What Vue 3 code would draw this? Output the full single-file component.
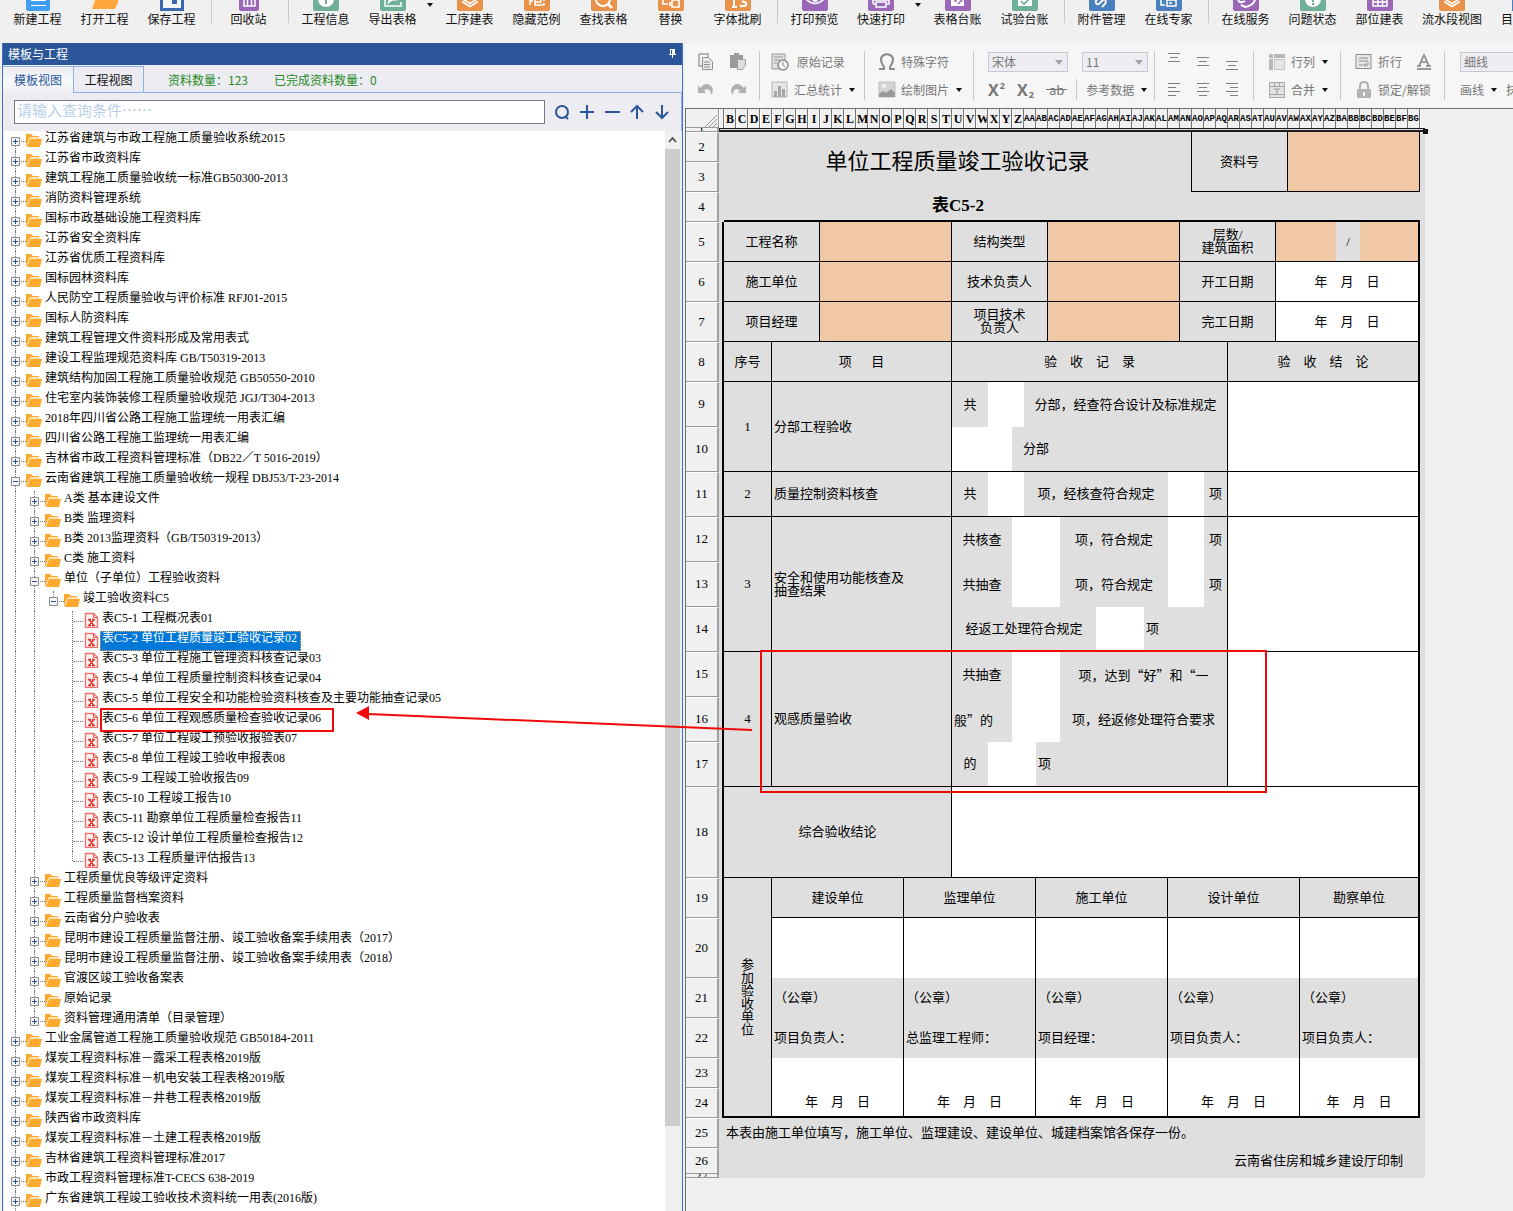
<script setup>
import { ref } from 'vue'

const orange = '#e8924a'
const green = '#6fae97'
const purple = '#9b68b8'
const blue = '#4a80bd'
const stack = '<path d="M5 1.5l8 5 8-5M5 -1.5l8 5 8-5" fill="none" stroke="#fff" stroke-width="1.6"/>'

const mainTools = [
  { label: '新建工程', art: '<path d="M1 0h24v9q0 2-2 2H3q-2 0-2-2z" fill="#3f9df2"/><path d="M6 0h15v1H6zM6 5h15v1H6z" fill="#fff"/>' },
  { label: '打开工程', art: '<path d="M0 9L3 0h24l-4 9H0z" fill="#ffa63c"/><path d="M0 7L3 0" stroke="#ffd9a6" fill="none"/>' },
  { label: '保存工程', art: '<path d="M1 0h24v11H1z" fill="#3a68ad"/><path d="M4 0h18v8H4z" fill="#f4f6fa"/><path d="M13 0h5v4h-5z" fill="#3a68ad"/>' },
  { type: 'sep' },
  { label: '回收站', art: `<path d="M3 0h20v9q0 2-2 2H5q-2 0-2-2z" fill="${purple}"/><path d="M8 0v6h11V0M11.500 0v6M15.500 0v6" stroke="#fff" stroke-width="1.5" fill="none"/>` },
  { type: 'sep' },
  { label: '工程信息', fill: green, art: '<circle cx="13" cy="-1" r="8" fill="#fff"/><path d="M12 0h2v4h-2z" fill="#6fae97"/>' },
  { label: '导出表格', fill: green, art: '<path d="M5 0v6h16V2M8 4q2-5 8-4M15 0l4-1M8 1l3 0" stroke="#fff" stroke-width="1.5" fill="none"/>' },
  { type: 'caret' },
  { label: '工序建表', fill: orange, art: stack },
  { label: '隐藏范例', fill: orange, art: '<path d="M6 0v5M6 1h3M11 0v5h9V3M11 2h6V0M20 0v1" stroke="#fff" stroke-width="1.5" fill="none"/>' },
  { label: '查找表格', fill: orange, art: '<circle cx="12" cy="-1" r="7" stroke="#fff" stroke-width="2" fill="none"/><path d="M17 4l4 4" stroke="#fff" stroke-width="2.500"/>' },
  { label: '替换', fill: orange, art: '<path d="M5 0v4h5M14 0h7v7h-7zM12 2v4" stroke="#fff" stroke-width="1.600" fill="none"/>' },
  { label: '字体批刷', fill: orange, art: '<path d="M9 0v6M7 7h5M16 6h4q2-1 1-3l-4-2M15 5l2 2" stroke="#fff" stroke-width="2" fill="none"/>' },
  { type: 'sep' },
  { label: '打印预览', fill: purple, art: '<path d="M4 -1q9 9 18 0" stroke="#fff" stroke-width="1.600" fill="none"/><circle cx="13" cy="-1" r="3" fill="#fff"/>' },
  { label: '快速打印', fill: purple, narrow: true, art: '<path d="M5 4V0h16v4h-3M5 4h3M8 2h10v5H8z" stroke="#fff" stroke-width="1.500" fill="none"/>' },
  { type: 'caret' },
  { label: '表格台账', fill: purple, art: '<path d="M6 0v6h13V0" fill="#fff"/><path d="M9 1h3M13 4l5-5" stroke="#9b68b8" stroke-width="1.500"/>' },
  { label: '试验台账', fill: green, art: '<path d="M6 0h14v6H6z" fill="#fff"/><path d="M9 1l3 3 5-5" stroke="#6fae97" stroke-width="1.600" fill="none"/>' },
  { type: 'sep' },
  { label: '附件管理', fill: blue, art: '<path d="M15 -1l-5 5q-2 1-3-1t1-3l4-4M12 1l3-2q3 2 1 5l-3 3" stroke="#fff" stroke-width="1.800" fill="none"/>' },
  { label: '在线专家', fill: blue, art: '<path d="M5 0v5h4M11 0h9v6h-9zM13 3h3" stroke="#fff" stroke-width="1.500" fill="none"/>' },
  { type: 'sep' },
  { label: '在线服务', fill: purple, art: '<path d="M5 0q2 4 7 1M8 5l4 2q8-1 10-7" stroke="#fff" stroke-width="2" fill="none"/>' },
  { label: '问题状态', fill: green, art: '<circle cx="13" cy="-1" r="8" fill="#fff"/><path d="M12 0h2v2h-2zM12 3h2v2h-2z" fill="#6fae97"/>' },
  { label: '部位建表', fill: purple, art: '<path d="M6 0v6h14V0M6 2h14M11 0v6M15.500 0v6" stroke="#fff" stroke-width="1.500" fill="none"/>' },
  { label: '流水段视图', fill: orange, wide: true, art: stack },
  { label: '目', cut: true, art: `<path d="M11 0h15v11H11z" fill="${blue}"/>` }
]

const tree = [
  '江苏省建筑与市政工程施工质量验收系统2015',
  '江苏省市政资料库',
  '建筑工程施工质量验收统一标准GB50300-2013',
  '消防资料管理系统',
  '国标市政基础设施工程资料库',
  '江苏省安全资料库',
  '江苏省优质工程资料库',
  '国标园林资料库',
  '人民防空工程质量验收与评价标准 RFJ01-2015',
  '国标人防资料库',
  '建筑工程管理文件资料形成及常用表式',
  '建设工程监理规范资料库 GB/T50319-2013',
  '建筑结构加固工程施工质量验收规范 GB50550-2010',
  '住宅室内装饰装修工程质量验收规范 JGJ/T304-2013',
  '2018年四川省公路工程施工监理统一用表汇编',
  '四川省公路工程施工监理统一用表汇编',
  '吉林省市政工程资料管理标准（DB22／T 5016-2019）',
  '-云南省建筑工程施工质量验收统一规程 DBJ53/T-23-2014',
  '>A类 基本建设文件',
  '>B类 监理资料',
  '>B类 2013监理资料（GB/T50319-2013）',
  '>C类 施工资料',
  '>-单位（子单位）工程验收资料',
  '>>-竣工验收资料C5',
  '>>>表C5-1 工程概况表01',
  '>>>表C5-2 单位工程质量竣工验收记录02',
  '>>>表C5-3 单位工程施工管理资料核查记录03',
  '>>>表C5-4 单位工程质量控制资料核查记录04',
  '>>>表C5-5 单位工程安全和功能检验资料核查及主要功能抽查记录05',
  '>>>表C5-6 单位工程观感质量检查验收记录06',
  '>>>表C5-7 单位工程竣工预验收报验表07',
  '>>>表C5-8 单位工程竣工验收申报表08',
  '>>>表C5-9 工程竣工验收报告09',
  '>>>表C5-10 工程竣工报告10',
  '>>>表C5-11 勘察单位工程质量检查报告11',
  '>>>表C5-12 设计单位工程质量检查报告12',
  '>>>表C5-13 工程质量评估报告13',
  '>工程质量优良等级评定资料',
  '>工程质量监督档案资料',
  '>云南省分户验收表',
  '>昆明市建设工程质量监督注册、竣工验收备案手续用表（2017）',
  '>昆明市建设工程质量监督注册、竣工验收备案手续用表（2018）',
  '>官渡区竣工验收备案表',
  '>原始记录',
  '>资料管理通用清单（目录管理）',
  '工业金属管道工程施工质量验收规范 GB50184-2011',
  '煤炭工程资料标准－露采工程表格2019版',
  '煤炭工程资料标准－机电安装工程表格2019版',
  '煤炭工程资料标准－井巷工程表格2019版',
  '陕西省市政资料库',
  '煤炭工程资料标准－土建工程表格2019版',
  '吉林省建筑工程资料管理标准2017',
  '市政工程资料管理标准T-CECS 638-2019',
  '广东省建筑工程竣工验收技术资料统一用表(2016版)'
].map((line) => {
  const [, arrows, minus, text] = line.match(/^(>*)(-?)(.*)$/)
  return { level: arrows.length, open: minus === '-', text, file: arrows.length === 3 }
})
// a guide continues below a row when a sibling of that level follows before its parent ends
const continues = (index, level) => {
  for (let i = index + 1; i < tree.length; i++) {
    if (tree[i].level === level) return true
    if (tree[i].level < level) return false
  }
  return level === 0
}
tree.forEach((node, i) => {
  node.guides = Array.from({ length: node.level }, (_, l) => continues(i, l))
  node.last = !continues(i, node.level)
  node.first = i === 0
})
const selected = ref(25)

const letters = 'ABCDEFGHIJKLMNOPQRSTUVWXYZ'
const columns = Array.from({ length: 58 }, (_, i) => {
  const n = i + 1
  return n < 26 ? letters[n] : letters[Math.floor(n / 26) - 1] + letters[n % 26]
})

// t text, s colspan, k rowspan, c cell classes
const c = (t, s, cls = '', k = 1) => ({ t, s, c: cls, k })
const date = '年　月　日'
const rows = [
  { n: 2, h: 30, cells: [c('单位工程质量竣工验收记录', 39, 'title r', 2), c('资料号', 8, 'r b', 2), c('', 11, 'o r b', 2)] },
  { n: 3, h: 30, cells: [] },
  { n: 4, h: 30, cells: [c('表C5-2', 39, 'subtitle bb'), c('', 19, 'bb')] },
  { n: 5, h: 40, f: 1, cells: [c('工程名称', 8, 'r b'), c('', 11, 'o r b'), c('结构类型', 8, 'r b'), c('', 11, 'o r b'), c('层数/\n建筑面积', 8, 'r b'), c('', 5, 'o b'), c('/', 2, 'b'), c('', 5, 'o b rr')] },
  { n: 6, h: 40, f: 1, cells: [c('施工单位', 8, 'r b'), c('', 11, 'o r b'), c('技术负责人', 8, 'r b'), c('', 11, 'o r b'), c('开工日期', 8, 'r b'), c(date, 12, 'w b rr')] },
  { n: 7, h: 40, f: 1, cells: [c('项目经理', 8, 'r b'), c('', 11, 'o r b'), c('项目技术\n负责人', 8, 'r b'), c('', 11, 'o r b'), c('完工日期', 8, 'r b'), c(date, 12, 'w b rr')] },
  { n: 8, h: 40, f: 1, cells: [c('序号', 4, 'r b'), c('项　  目', 15, 'r b'), c('验　收　记　录', 23, 'r b'), c('验　收　结　论', 16, 'b rr')] },
  { n: 9, h: 45, f: 1, cells: [c('1', 4, 'r b', 2), c('分部工程验收', 15, 'l r b', 2), c('共', 3), c('', 3, 'w'), c('分部，经查符合设计及标准规定', 17, 'r'), c('', 16, 'w b rr', 2)] },
  { n: 10, h: 45, f: 1, cells: [c('', 5, 'w b'), c('分部', 18, 'l in r b')] },
  { n: 11, h: 45, f: 1, cells: [c('2', 4, 'r b'), c('质量控制资料核查', 15, 'l r b'), c('共', 3, 'b'), c('', 3, 'w b'), c('项，经核查符合规定', 12, 'b'), c('', 3, 'w b'), c('项', 2, 'r b'), c('', 16, 'w b rr')] },
  { n: 12, h: 45, f: 1, cells: [c('3', 4, 'r b', 3), c('安全和使用功能核查及\n抽查结果', 15, 'l r b', 3), c('共核查', 5), c('', 4, 'w'), c('项，符合规定', 9), c('', 3, 'w'), c('项', 2, 'r'), c('', 16, 'w b rr', 3)] },
  { n: 13, h: 45, f: 1, cells: [c('共抽查', 5), c('', 4, 'w'), c('项，符合规定', 9), c('', 3, 'w'), c('项', 2, 'r')] },
  { n: 14, h: 45, f: 1, cells: [c('经返工处理符合规定', 12, 'b'), c('', 4, 'w b'), c('项', 7, 'l r b')] },
  { n: 15, h: 45, f: 1, cells: [c('4', 4, 'r b', 3), c('观感质量验收', 15, 'l r b', 3), c('共抽查', 5), c('', 4, 'w'), c('项，达到“好”和“一', 14, 'cjk r'), c('', 16, 'w b rr', 3)] },
  { n: 16, h: 45, f: 1, cells: [c('般”的', 5, 'cjk l'), c('', 4, 'w'), c('项，经返修处理符合要求', 14, 'r')] },
  { n: 17, h: 45, f: 1, cells: [c('的', 3, 'b'), c('', 4, 'w b'), c('项', 16, 'l r b')] },
  { n: 18, h: 91, f: 1, cells: [c('综合验收结论', 19, 'r b'), c('', 39, 'w b rr')] },
  { n: 19, h: 40, f: 1, cells: [c('参加验收单位', 4, 'upright r bb', 6), c('建设单位', 11, 'r b'), c('监理单位', 11, 'r b'), c('施工单位', 11, 'r b'), c('设计单位', 11, 'r b'), c('勘察单位', 10, 'b rr')] },
  { n: 20, h: 60, f: 1, cells: [c('', 11, 'w r'), c('', 11, 'w r'), c('', 11, 'w r'), c('', 11, 'w r'), c('', 10, 'w rr')] },
  { n: 21, h: 40, f: 1, cells: [c('（公章）', 11, 'l r'), c('（公章）', 11, 'l r'), c('（公章）', 11, 'l r'), c('（公章）', 11, 'l r'), c('（公章）', 10, 'l rr')] },
  { n: 22, h: 40, f: 1, cells: [c('项目负责人：', 11, 'l r'), c('总监理工程师：', 11, 'l r'), c('项目经理：', 11, 'l r'), c('项目负责人：', 11, 'l r'), c('项目负责人：', 10, 'l rr')] },
  { n: 23, h: 30, f: 1, cells: [c('', 11, 'w r'), c('', 11, 'w r'), c('', 11, 'w r'), c('', 11, 'w r'), c('', 10, 'w rr')] },
  { n: 24, h: 30, f: 1, cells: [c(date, 11, 'w r bb'), c(date, 11, 'w r bb'), c(date, 11, 'w r bb'), c(date, 11, 'w r bb'), c(date, 10, 'w rr bb')] },
  { n: 25, h: 30, cells: [c('本表由施工单位填写，施工单位、监理建设、建设单位、城建档案馆各保存一份。', 58, 'l')] },
  { n: 26, h: 26, cells: [c('云南省住房和城乡建设厅印制', 58, 'end')] }
]

const aligns = [
  ['M3 1h12M5 5h8M3 9h12', 'M3 5h12M5 9h8M3 13h12', 'M3 9h12M5 13h8M3 17h12'],
  ['M3 3h12M3 7h8M3 11h12M3 15h8', 'M3 3h12M5 7h8M3 11h12M5 15h8', 'M3 3h12M7 7h8M3 11h12M7 15h8']
]
</script>

<template>
  <div class="app">
    <nav class="menu">
      <template v-for="(tool, i) in mainTools" :key="i">
        <span v-if="tool.type === 'sep'" class="menu-sep"></span>
        <button v-else-if="tool.type === 'caret'" class="menu-caret" aria-label="更多"><i class="caret"></i></button>
        <button v-else class="menu-item" :class="{ wide: tool.wide, narrow: tool.narrow, cut: tool.cut }">
          <svg width="26" height="11" viewBox="0 0 26 11">
            <path v-if="tool.fill" d="M0 0h26v9q0 2-2 2H2q-2 0-2-2z" :fill="tool.fill" />
            <g v-html="tool.art"></g>
          </svg>
          <span>{{ tool.label }}</span>
        </button>
      </template>
    </nav>

    <main class="work">
      <aside class="panel">
        <header class="panel-title">
          <span>模板与工程</span>
          <svg width="9" height="10" viewBox="0 0 9 10"><path d="M2 0h5v5h1v1H5v3H4V6H1V5h1z" fill="#fff" /><path d="M3 1h1v4H3z" fill="#2b579a" /></svg>
        </header>
        <div class="tabs">
          <button class="tab active">模板视图</button>
          <button class="tab">工程视图</button>
          <p class="counts"><span>资料数量：123</span><span>已完成资料数量：0</span></p>
        </div>
        <div class="search">
          <input type="text" aria-label="查询条件" placeholder="请输入查询条件⋯⋯" />
          <button aria-label="查询"><svg width="18" height="18" viewBox="0 0 18 18"><circle cx="9" cy="9" r="6" /><path d="M12 13l3 3" /></svg></button>
          <button aria-label="展开"><svg width="18" height="18" viewBox="0 0 18 18"><path d="M9 2v14M2 9h14" /></svg></button>
          <button aria-label="折叠"><svg width="18" height="18" viewBox="0 0 18 18"><path d="M2 9h15" /></svg></button>
          <button aria-label="上一个"><svg width="18" height="18" viewBox="0 0 18 18"><path d="M9 16V3M3 9l6-6 6 6" /></svg></button>
          <button aria-label="下一个"><svg width="18" height="18" viewBox="0 0 18 18"><path d="M9 2v13M3 9l6 6 6-6" /></svg></button>
        </div>
        <div class="tree-box">
          <ul class="tree" role="tree">
            <li v-for="(node, i) in tree" :key="i" role="treeitem" :class="{ selected: i === selected }">
              <span v-for="(on, l) in node.guides" :key="l" class="guide" :class="{ line: on }"></span>
              <span class="guide branch line" :class="{ last: node.last, first: node.first }">
                <button v-if="!node.file" class="expander" :aria-label="node.open ? '折叠' : '展开'">
                  <svg width="9" height="9" viewBox="0 0 9 9"><path d="M.5.5h8v8h-8z" fill="#f4f4f4" stroke="#8c8c8c" /><path :d="node.open ? 'M2 4.500h5' : 'M2 4.500h5M4.500 2v5'" stroke="#2f4f9a" /></svg>
                </button>
              </span>
              <svg v-if="node.file" class="icon" width="16" height="16" viewBox="0 0 16 16"><path d="M2.500 1.500h8l4 4v10h-12z" fill="#fff4f4" stroke="#f4706c" stroke-width="1.400" /><path d="M10.500 1.500v4h4" fill="none" stroke="#f0534f" /><path d="M5 7.500h3M5 13.500h3M6 7.500l5 6M11 7.500l-5 6M9 7.500h3M9 13.500h3" stroke="#e8302c" stroke-width="1.300" /></svg>
              <svg v-else class="icon" width="16" height="16" viewBox="0 0 16 16"><path d="M0 2h5l2 2h6v3H4L1 14H0z" fill="#ffa92e" /><path d="M4 5h10v2H4z" fill="#ffe2b4" /><path d="M4 7h12l-2 8H1z" fill="#ffa92e" /><path d="M1 13l3-7" stroke="#ffe8c4" /></svg>
              <span class="label" @click="selected = i">{{ node.text }}</span>
            </li>
          </ul>
          <div class="scrollbar">
            <svg width="15" height="18" viewBox="0 0 15 18"><path d="M4 11l3.500-4 3.500 4" fill="none" stroke="#505050" stroke-width="1.800" /></svg>
            <div class="track"><div class="thumb"></div></div>
          </div>
        </div>
      </aside>

      <section class="editor">
        <div class="ribbon">
          <div class="group g-edit">
            <div>
              <button aria-label="复制"><svg width="18" height="18" viewBox="0 0 18 18"><path d="M2 1h9v3M2 1v12h3" fill="none" stroke="#a0a0a0" stroke-width="1.500" /><path d="M5.500 4.500h6l4 4v8h-10z" fill="#ececec" stroke="#8e8e8e" /><path d="M7 9h6M7 11.500h6M7 14h6" stroke="#8e8e8e" /></svg></button>
              <button aria-label="粘贴"><svg width="18" height="18" viewBox="0 0 18 18"><path d="M1 2h4V0h5v2h4v5H8v8H1z" fill="#9a9a9a" /><path d="M8.500 6.500h8v6l-3 4h-5z" fill="#dedede" stroke="#a0a0a0" /></svg></button>
            </div>
            <div>
              <button aria-label="撤销"><svg width="18" height="18" viewBox="0 0 18 18"><path d="M1 4l2 3Q9 0 14 5q4 4 0 9 0-8-7-5l2 3H1z" fill="#b0b0b0" /></svg></button>
              <button aria-label="重做"><svg width="18" height="18" viewBox="0 0 18 18"><path d="M17 4l-2 3Q9 0 4 5q-4 4 0 9 0-8 7-5l-2 3h8z" fill="#b0b0b0" /></svg></button>
            </div>
          </div>
          <div class="group g-record">
            <div><button><svg width="18" height="18" viewBox="0 0 18 18"><path d="M1 1h13v15H1z" fill="#e2e2e2" stroke="#9a9a9a" /><path d="M3 4h9M3 7h6M3 10h3" stroke="#9a9a9a" /><circle cx="12" cy="12" r="5" fill="#f6f6f6" stroke="#8a8a8a" stroke-width="1.500" /><path d="M12 9v3l2 2" fill="none" stroke="#8a8a8a" /></svg>&nbsp;原始记录</button></div>
            <div><button><svg width="18" height="18" viewBox="0 0 18 18"><path d="M1 1h15v15H1z" fill="#e6e6e6" stroke="#b4b4b4" /><path d="M3 10h3v6H3zM7 5h3v11H7zM11 8h3v8h-3z" fill="#a6a6a6" /></svg>汇总统计<i class="caret"></i></button></div>
          </div>
          <div class="group g-symbol">
            <div><button><svg width="18" height="18" viewBox="0 0 18 18"><path d="M1 16h5v-2Q0 5 6 2q3-1.500 6 0 6 3 0 12v2h5" fill="none" stroke="#8a8a8a" stroke-width="2" /></svg>特殊字符</button></div>
            <div><button><svg width="18" height="18" viewBox="0 0 18 18"><path d="M1 1h16v15H1z" fill="#d4d4d4" stroke="#bdbdbd" /><path d="M1 13l4-3 3 2 5-4 4 4v4H1z" fill="#999" /><circle cx="6" cy="5" r="2" fill="#f4f4f4" /></svg>绘制图片<i class="caret"></i></button></div>
          </div>
          <div class="group g-font">
            <div>
              <span class="pick font"><select aria-label="字体"><option>宋体</option></select></span>
              <span class="pick size"><select aria-label="字号"><option>11</option></select></span>
            </div>
            <div>
              <button class="script">X<sup>2</sup></button>
              <button class="script">X<sub>2</sub></button>
              <button class="strike"><s>&nbsp;ab&nbsp;</s></button>
              <span class="inner-sep"></span>
              <button class="reference">参考数据<i class="caret"></i></button>
            </div>
          </div>
          <div class="group g-align">
            <div v-for="(line, r) in aligns" :key="r">
              <button v-for="(d, k) in line" :key="k" aria-label="对齐"><svg width="18" height="18" viewBox="0 0 18 18"><path :d="d" stroke="#808080" transform="translate(0 -.5)" /></svg></button>
            </div>
          </div>
          <div class="group g-cells">
            <div><button><svg width="18" height="18" viewBox="0 0 18 18"><path d="M1 1h4v4H1zM6 1h11v4H6zM1 6h4v11H1z" fill="#b8b8b8" /><path d="M6.500 6.500h10v10h-10z" fill="#e6e6e6" stroke="#c4c4c4" /></svg>行列<i class="caret"></i></button></div>
            <div><button><svg width="18" height="18" viewBox="0 0 18 18"><path d="M1.500 1.500h15v4h-15zM6.500 1.500v4M11.500 1.500v4M1.500 5.500h15v8h-15zM1.500 13.500h15v3h-15z" fill="#e2e2e2" stroke="#a8a8a8" /><path d="M6 8h6M9 8v5" stroke="#999" /></svg>合并<i class="caret"></i></button></div>
          </div>
          <div class="group g-wrap">
            <div>
              <button><svg width="18" height="18" viewBox="0 0 18 18"><path d="M1 1.500h15v14H1z" fill="#e8e8e8" stroke="#8c8c8c" /><path d="M4 5h9M4 8h9M4 12h4M13 9v3h-4M11 10l-2 2 2 2" fill="none" stroke="#8c8c8c" /></svg>折行</button>
              <button aria-label="字体颜色" class="color"><svg width="16" height="18" viewBox="0 0 16 18"><path d="M3 13L8 2l5 11M5 9h6M1 13h4M10 13h5" fill="none" stroke="#888" stroke-width="1.600" /><path d="M1 15h14v2H1z" fill="#999" /></svg></button>
            </div>
            <div><button><svg width="18" height="18" viewBox="0 0 18 18"><path d="M5 8V5q0-4 4-4t4 4v3" fill="none" stroke="#b0b0b0" stroke-width="2" /><path d="M2 8h14v9H2z" fill="#b4b4b4" /><path d="M8 11h2v4H8z" fill="#f0f0f0" /></svg>锁定/解锁</button></div>
          </div>
          <div class="group g-line">
            <div><span class="pick"><select aria-label="线型"><option>细线</option></select></span></div>
            <div><button>画线<i class="caret"></i></button><button>抹</button></div>
          </div>
        </div>

        <div class="sheet">
          <table>
            <colgroup>
              <col class="c-head" /><col class="c-edge" /><col v-for="n in 58" :key="n" class="c-unit" /><col class="c-edge" />
            </colgroup>
            <thead>
              <tr>
                <td class="corner"><svg width="13" height="12" viewBox="0 0 13 12"><path d="M0 12L12 0M4 12l8-8M8 12l4-4" stroke="#999" /></svg></td>
                <th></th>
                <th v-for="name in columns" :key="name" scope="col" :class="{ pair: name.length > 1 }">{{ name }}</th>
                <th class="tail"></th>
              </tr>
            </thead>
            <tbody>
              <tr class="thin">
                <th scope="row"><div>1</div></th>
                <td colspan="60" class="cursor"><i></i></td>
              </tr>
              <tr v-for="row in rows" :key="row.n" :class="{ framed: row.f }" :style="{ height: row.h + 'px' }">
                <th scope="row">{{ row.n }}</th>
                <td class="edge"></td>
                <td v-for="(cell, k) in row.cells" :key="k" :colspan="cell.s" :rowspan="cell.k" :class="cell.c"><span>{{ cell.t }}</span></td>
                <td></td>
              </tr>
              <tr class="thin">
                <th scope="row"><div>27</div></th>
                <td colspan="60"></td>
              </tr>
            </tbody>
          </table>
        </div>
      </section>
    </main>

    <svg class="marks" width="1280" height="800" viewBox="0 0 1280 800" aria-hidden="true">
      <rect x="101" y="709" width="232" height="22" />
      <rect x="761" y="651" width="505" height="141" />
      <path d="M752 730L368 714" />
      <path class="tip" d="M356 713l13-7v14z" />
    </svg>
  </div>
</template>

<style>
body {
  margin: 0;
  background: #f0f0f0;
}
</style>

<style scoped>
.app {
  position: relative;
  display: flex;
  flex-direction: column;
  height: 100vh;
  overflow: hidden;
  background: #f0f0f0;
  color: #111;
  font: 12px/16px "Noto Sans CJK SC", sans-serif;
}
.app *, .app *::before, .app *::after { box-sizing: border-box; }
button {
  display: inline-flex;
  align-items: center;
  padding: 0;
  border: 0;
  background: none;
  color: inherit;
  font: inherit;
  white-space: nowrap;
}
svg { display: block; flex: none; }
.caret {
  width: 6px;
  border: 3px solid transparent;
  border-top: 4px solid #111;
  border-bottom: 0;
}

.menu {
  display: flex;
  flex: none;
  height: 43px;
  padding-left: 4px;
}
.menu-item {
  flex: none;
  flex-direction: column;
  justify-content: flex-start;
  width: 67px;
}
.menu-item.wide { width: 78px; }
.menu-item.narrow { width: 66px; }
.menu-item.cut { align-items: flex-start; padding-left: 10px; }
.menu-sep {
  flex: none;
  width: 10px;
  height: 23px;
  background: linear-gradient(#c9c9c9, #c9c9c9) 6px 0 / 1px 100% no-repeat;
}
.menu-caret {
  flex: none;
  align-items: flex-start;
  width: 10px;
  padding: 3px 0 0 1px;
}

.work {
  display: flex;
  flex: 1;
  min-height: 0;
}
.panel {
  display: flex;
  flex: 0 0 681px;
  flex-direction: column;
  margin-left: 2px;
  border: solid #3f74c4;
  border-width: 0 1px;
  background: #edecf2;
}
.panel-title {
  display: flex;
  flex: none;
  align-items: center;
  justify-content: space-between;
  height: 22px;
  padding: 0 5px;
  background: #2b579a;
  color: #fff;
}
.tabs {
  display: flex;
  flex: none;
  height: 28px;
  padding-top: 1px;
  background: linear-gradient(#8db2e8, #8db2e8) 71px 27px / 100% 1px no-repeat;
}
.tab {
  justify-content: center;
  width: 71px;
  border: solid #8db2e8;
  border-width: 1px 1px 0 0;
}
.tab.active {
  background: linear-gradient(#edecf2, #fafafa 60%, #edecf2);
  color: #2b579a;
}
.tab:not(.active) { width: 70px; border-bottom-width: 1px; }
.counts {
  display: flex;
  gap: 26px;
  align-items: center;
  margin: 0 0 0 24px;
  color: #228b22;
}
.search {
  display: flex;
  flex: none;
  align-items: center;
  gap: 7px;
  height: 38px;
  padding: 0 10px 0 11px;
  border-right: 1px solid #8db2e8;
}
.search input {
  flex: 1;
  min-width: 0;
  height: 24px;
  margin-right: 1px;
  padding: 0 2px 6px;
  border: 1px solid #7a7a7a;
  background: #fff;
  font: 15px/16px "Noto Sans CJK SC", sans-serif;
}
.search input::placeholder { color: #b7cfea; opacity: 1; }
.search svg { fill: none; stroke: #2b579a; stroke-width: 2; }
.tree-box {
  display: flex;
  flex: 1;
  min-height: 0;
  padding: 0 2px 0 1px;
}
.tree {
  flex: 1;
  margin: 0;
  padding: 0 0 0 2px;
  overflow: hidden;
  background: #fff;
  list-style: none;
  color: #000;
  font-family: "Liberation Serif", "Noto Sans CJK SC", serif;
}
.tree li { display: flex; height: 20px; }
.guide {
  position: relative;
  flex: none;
  width: 19px;
  height: 20px;
}
.guide.line::before {
  content: "";
  position: absolute;
  inset: 0 auto 0 9px;
  border-left: 1px dotted #777;
}
.guide.branch::after {
  content: "";
  position: absolute;
  top: 10px;
  left: 10px;
  width: 10px;
  border-top: 1px dotted #777;
}
.guide.last::before { bottom: 10px; }
.guide.first::before { top: 10px; }
.expander {
  position: absolute;
  top: 6px;
  left: 5px;
  z-index: 1;
}
.icon { margin: 1px 3px 0 1px; }
.label {
  height: 20px;
  padding-right: 2px;
  line-height: 14px;
  white-space: pre;
}
.selected .label {
  margin-left: -2px;
  padding: 0 3px 0 1px;
  border: 1px dotted #e8a060;
  background: #0078d7;
  color: #fff;
  line-height: 12px;
}
.scrollbar {
  display: flex;
  flex-direction: column;
  width: 15px;
  background: #f0f0f0;
}
.track { flex: 1; }
.thumb { height: 92%; background: #cdcdcd; }

.editor {
  display: flex;
  flex: 1;
  flex-direction: column;
  min-width: 0;
  margin-left: 2px;
}
.ribbon {
  display: flex;
  flex: none;
  height: 65px;
  padding: 8px 0 7px 1px;
  overflow: hidden;
  background: #f6f6f6;
  color: #777;
}
.group {
  display: flex;
  flex: none;
  flex-direction: column;
  justify-content: space-between;
  height: 49px;
  padding-left: 15px;
  border-right: 1px solid #c6c6cc;
}
.group > div { display: flex; align-items: center; height: 21px; }
.group button { gap: 5px; }
.group button .caret { margin-left: 2px; }
.g-edit { width: 74px; padding-left: 11px; }
.g-edit > div { gap: 14px; }
.g-record { width: 105px; padding-left: 11px; }
.g-symbol { width: 109px; padding-left: 13px; }
.g-font { width: 181px; padding-left: 14px; }
.g-font > div:first-child { gap: 14px; }
.g-font > div:last-child { gap: 9px; }
.g-align { width: 99px; padding-left: 10px; }
.g-align > div { gap: 11px; }
.g-cells { width: 87px; padding-left: 14px; }
.g-wrap { width: 104px; padding-left: 14px; }
.g-wrap .color { margin-left: 14px; }
.g-line { flex: 1; border-right: 0; }
.g-line > div { gap: 9px; }
.pick { position: relative; display: block; width: 80px; }
.pick.size { width: 66px; }
.pick::after {
  content: "";
  position: absolute;
  top: 8px;
  right: 5px;
  border: 4px solid transparent;
  border-top: 5px solid #a5a5a5;
  border-bottom: 0;
}
select {
  display: block;
  width: 100%;
  height: 20px;
  padding: 0 3px;
  border: 1px solid #c8c8d8;
  border-radius: 0;
  appearance: none;
  background: #ededf2;
  color: #777;
  font: 12px/16px "Noto Sans CJK SC", sans-serif;
}
.group .script {
  gap: 1px;
  width: 20px;
  height: 18px;
  font: bold 16px/18px "Open Sans", sans-serif;
}
.script sup, .script sub { font-size: 9px; line-height: 9px; }
.script sup { align-self: flex-start; }
.script sub { align-self: flex-end; }
.strike { font-size: 13px; }
.inner-sep { width: 1px; height: 21px; background: #c6c6cc; }

.sheet {
  flex: 1;
  min-height: 0;
  overflow: hidden;
  border: solid #6e6e6e;
  border-width: 1px 0 0 1px;
}
table {
  width: 739px;
  table-layout: fixed;
  border-collapse: separate;
  border-spacing: 0;
  color: #000;
  font: 13px/13px "Liberation Serif", "Noto Sans CJK SC", serif;
}
.c-head { width: 33px; }
.c-edge { width: 5px; }
.c-unit { width: 12px; }
th, td { padding: 0; text-align: center; vertical-align: middle; }
thead th {
  height: 19px;
  overflow: hidden;
  border-left: 1px solid #fff;
  border-right: 1px solid #777;
  background: #f0f0f0;
  font: bold 12px/12px "Liberation Serif", serif;
}
thead .pair { border-left: 0; font: bold 9px/12px "Liberation Mono", monospace; }
thead .tail { border-right: 0; }
.corner { border-right: 1px solid #999; border-bottom: 1px solid #999; }
.corner svg { margin: 5px 0 0 19px; }
tbody th {
  padding-bottom: 2px;
  border-top: 1px solid #fff;
  border-right: 2px solid #a0a0a0;
  border-bottom: 1px solid #999;
  background: #f0f0f0;
  font-weight: normal;
}
tbody td { padding-bottom: 1px; background: #dfdfdf; white-space: pre; }
.thin { height: 4px; }
.thin th { padding: 0; border-top: 0; }
.thin td { padding: 0; }
.thin div { height: 3px; overflow: hidden; line-height: 3px; }
.thin .cursor {
  position: relative;
  border: solid #1c1a20;
  border-width: 1px 0 2px 1px;
}
.cursor i {
  position: absolute;
  top: 0;
  right: -3px;
  width: 5px;
  height: 5px;
  background: #111;
}
td.w { background: #fff; }
td.o { background: #f0c8a5; }
td.r { border-right: 1px solid #000; }
td.b { border-bottom: 1px solid #000; }
td.rr { border-right: 2px solid #000; }
td.bb { border-bottom: 2px solid #000; }
td.l { padding-left: 2px; text-align: left; }
td.in { padding-left: 11px; }
td.end { padding-right: 17px; text-align: right; }
td.cjk { font-family: "Noto Sans CJK SC", sans-serif; }
.framed .edge { border-right: 2px solid #000; }
.title { font-size: 22px; line-height: 26px; }
.subtitle { font-size: 17px; font-weight: bold; }
.upright span {
  display: block;
  width: 13px;
  margin: 0 auto;
  white-space: normal;
  word-break: break-all;
}

.marks {
  position: absolute;
  top: 0;
  left: 0;
  pointer-events: none;
}
.marks rect, .marks path { fill: none; stroke: #f00a0a; stroke-width: 2; }
.marks .tip { fill: #f00a0a; stroke: none; }
</style>
